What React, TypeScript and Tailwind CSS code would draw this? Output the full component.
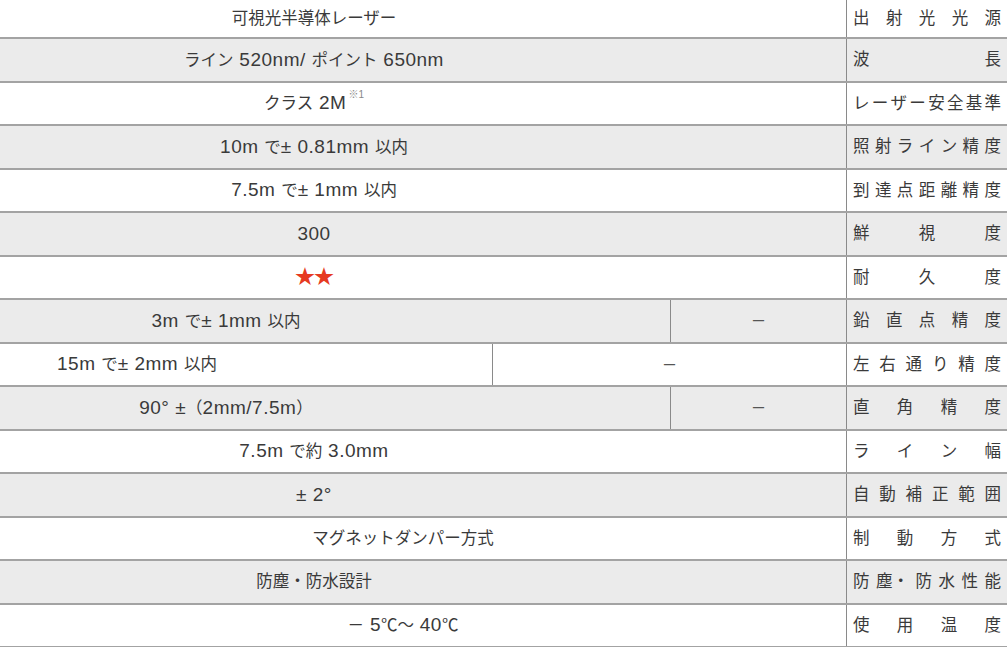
const FONT = "font-['Liberation_Sans','Noto_Sans_CJK_JP',sans-serif]";

type Cell = { text: React.ReactNode; w: string; shift?: boolean };

interface SpecRow {
  cells: Cell[];
  label: string[];
}

const FULL = "w-[1064px]";

// Latin runs are drawn a bit larger and wider than the kana around them
function Mixed({ text }: { text: string }) {
  const parts = text.split(/([\x20-\x7E°±]+)/);
  return (
    <>
      {parts.map((p, i) =>
        /[\x20-\x7E°±]/.test(p) ? (
          <span key={i} className="text-[19px] tracking-[0.5px]">
            {p}
          </span>
        ) : (
          <span key={i}>{p}</span>
        ),
      )}
    </>
  );
}

const DASH = <span className="text-[14px] text-[#555]">ー</span>;

const rows: SpecRow[] = [
  { cells: [{ text: "可視光半導体レーザー", w: FULL }], label: ["出", "射", "光", "光", "源"] },
  { cells: [{ text: <Mixed text="ライン 520nm/ ポイント 650nm" />, w: FULL }], label: ["波", "長"] },
  {
    cells: [
      {
        text: (
          <>
            <Mixed text="クラス 2M" />
            <sup className="ml-[2px] text-[10px] text-[#888] align-[6px]">※1</sup>
          </>
        ),
        w: FULL,
      },
    ],
    label: ["レ", "ー", "ザ", "ー", "安", "全", "基", "準"],
  },
  { cells: [{ text: <Mixed text="10m で± 0.81mm 以内" />, w: FULL }], label: ["照", "射", "ラ", "イ", "ン", "精", "度"] },
  { cells: [{ text: <Mixed text="7.5m で± 1mm 以内" />, w: FULL }], label: ["到", "達", "点", "距", "離", "精", "度"] },
  { cells: [{ text: <Mixed text="300" />, w: FULL }], label: ["鮮", "視", "度"] },
  {
    cells: [{ text: <span className="text-[20px] tracking-[-1px] text-[#e63a22]">★★</span>, w: FULL }],
    label: ["耐", "久", "度"],
  },
  {
    cells: [
      { text: <Mixed text="3m で± 1mm 以内" />, w: "w-[888px]" },
      { text: DASH, w: "w-[176px]" },
    ],
    label: ["鉛", "直", "点", "精", "度"],
  },
  {
    cells: [
      { text: <Mixed text="15m で± 2mm 以内" />, w: "w-[710px]" },
      { text: DASH, w: "w-[354px]" },
    ],
    label: ["左", "右", "通", "り", "精", "度"],
  },
  {
    cells: [
      { text: <Mixed text="90° ±（2mm/7.5m）" />, w: "w-[888px]" },
      { text: DASH, w: "w-[176px]" },
    ],
    label: ["直", "角", "精", "度"],
  },
  { cells: [{ text: <Mixed text="7.5m で約 3.0mm" />, w: FULL }], label: ["ラ", "イ", "ン", "幅"] },
  { cells: [{ text: <Mixed text="± 2°" />, w: FULL }], label: ["自", "動", "補", "正", "範", "囲"] },
  { cells: [{ text: "マグネットダンパー方式", w: FULL, shift: true }], label: ["制", "動", "方", "式"] },
  { cells: [{ text: "防塵・防水設計", w: FULL }], label: ["防", "塵・", "防", "水", "性", "能"] },
  { cells: [{ text: <Mixed text="－ 5℃〜 40℃" />, w: FULL, shift: true }], label: ["使", "用", "温", "度"] },
];

function Row({ row, index }: { row: SpecRow; index: number }) {
  const bg = index % 2 === 1 ? "bg-[#ebebeb]" : "bg-white";
  const height = index === 0 ? "h-[39px]" : "h-[43.5px]";
  return (
    <div className={`flex ${height} ${bg} border-b-2 border-[#a3a3a3]`}>
      {row.cells.map((c, i) => (
        <div
          key={i}
          className={`flex ${c.w} shrink-0 items-center justify-center ${
            i > 0 ? "border-l border-[#8a8a8a]" : ""
          } ${c.shift ? "pl-[178px]" : ""}`}
        >
          <span className="whitespace-pre">{c.text}</span>
        </div>
      ))}
      <div className="flex w-[161px] shrink-0 items-center justify-between border-l border-[#8a8a8a] pl-[6px] pr-[6px]">
        {row.label.map((ch, i) => (
          <span key={i}>{ch}</span>
        ))}
      </div>
    </div>
  );
}

export default function App() {
  return (
    <div className={`h-[647px] w-[1007px] overflow-hidden bg-white ${FONT} text-[16.5px] text-[#3a3a3a]`}>
      <div className="ml-[-218px] flex w-[1225px] flex-col">
        {rows.map((row, i) => (
          <Row key={i} row={row} index={i} />
        ))}
      </div>
    </div>
  );
}
